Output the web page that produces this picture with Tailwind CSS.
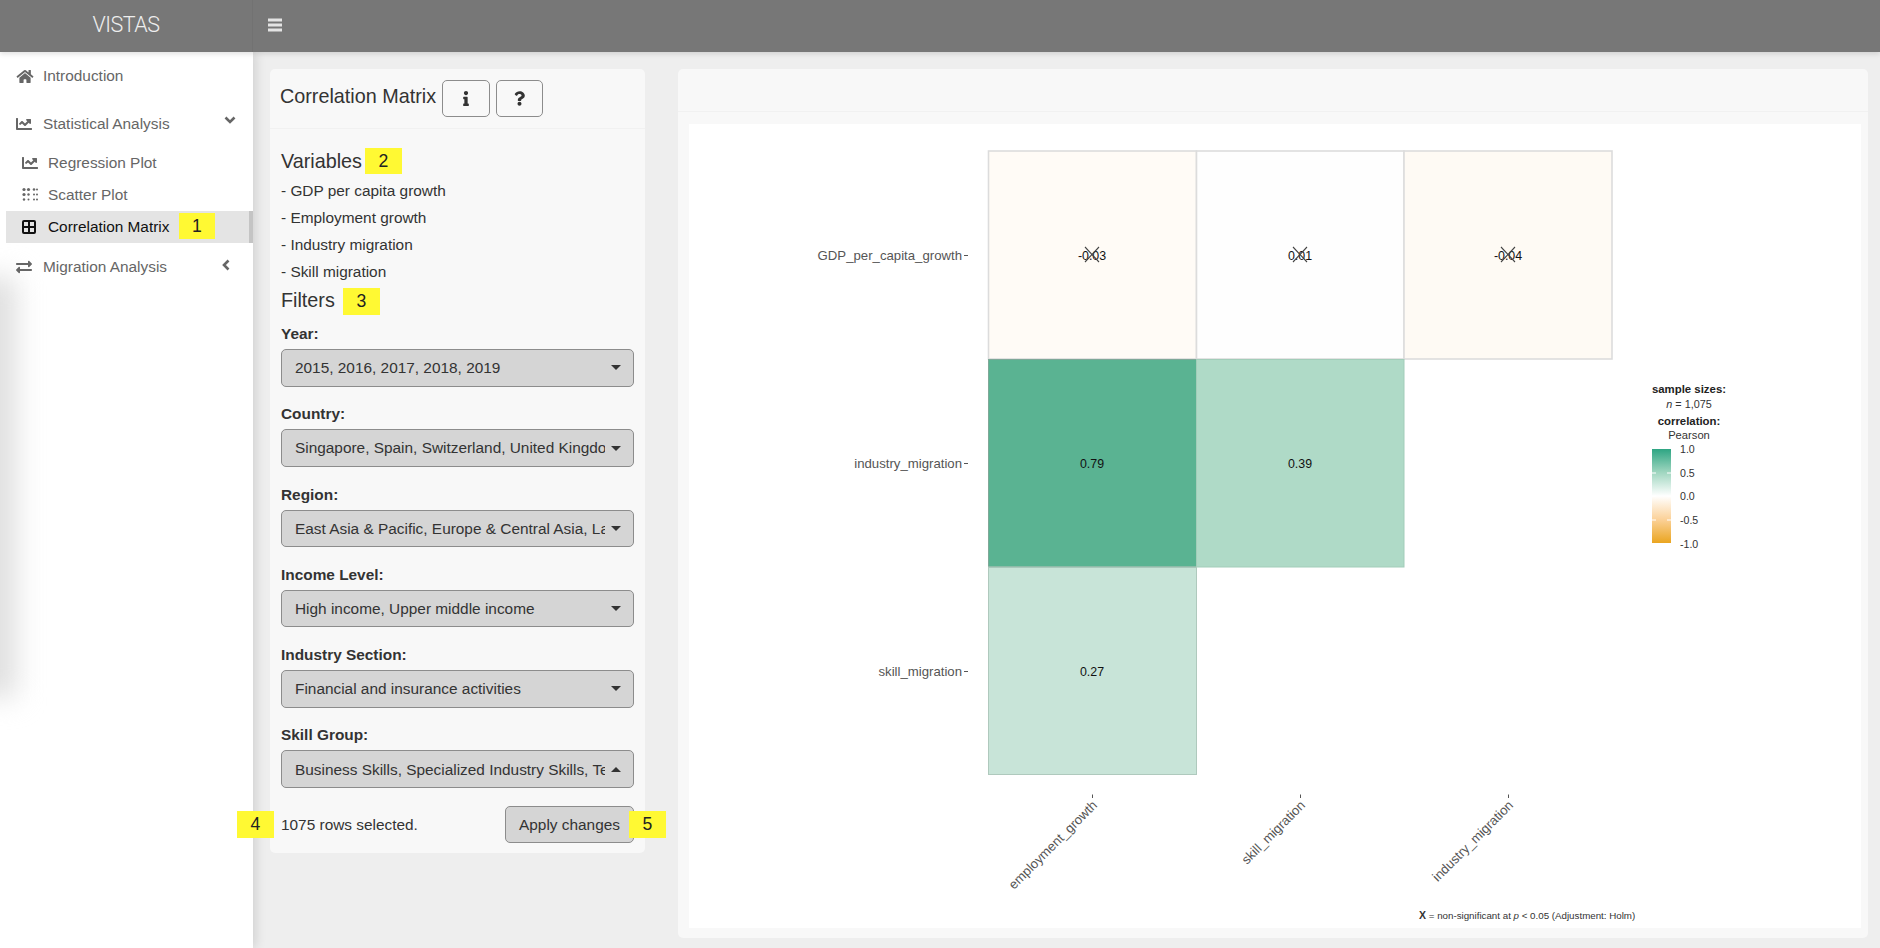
<!DOCTYPE html>
<html lang="en">
<head>
  <meta charset="UTF-8" />
  <title>VISTAS - Correlation Matrix</title>
  <script src="https://cdn.jsdelivr.net/npm/@tailwindcss/browser@4"></script>
</head>
<body class="relative h-[948px] overflow-hidden bg-[#eeeeee] font-['Liberation_Sans',sans-serif] text-[15.4px] text-[#333333]">

  <!-- top bar -->
  <header class="relative z-20 flex h-[52px] bg-[#777777] shadow-[0_2px_5px_rgba(0,0,0,0.12)]">
    <div class="flex w-[253px] items-center justify-center border-r border-[#727272] pb-[1px] font-['Roboto',sans-serif] text-[21.5px] font-light tracking-[-0.5px] text-[#eeeeee]">VISTAS</div>
    <button class="flex w-[44px] items-center justify-center pb-[2px]">
      <svg class="h-[14px] w-[14px] fill-[#e4e4e4]" viewBox="0 0 14 14"><rect y="0.5" width="14" height="3"/><rect y="5.5" width="14" height="3"/><rect y="10.5" width="14" height="3"/></svg>
    </button>
  </header>

  <div class="flex h-[896px]">
    <!-- sidebar -->
    <aside class="relative z-10 w-[253px] shrink-0 overflow-x-clip bg-white pt-[6px] text-[#666666] shadow-[3px_0_10px_rgba(0,0,0,0.12)]">
      <div class="absolute top-[225px] left-[-24px] h-[420px] w-[40px] bg-[#dedede] blur-[14px]"></div>
      <a class="relative flex h-[36px] items-center pl-[16px]">
        <svg class="mr-[9px] h-[15px] w-[18px] fill-[#666666]" viewBox="0 0 576 512"><path d="M280.37 148.26L96 300.11V464a16 16 0 0 0 16 16l112.06-.29a16 16 0 0 0 15.92-16V368a16 16 0 0 1 16-16h64a16 16 0 0 1 16 16v95.64a16 16 0 0 0 16 16.05L464 480a16 16 0 0 0 16-16V300L295.67 148.26a12.19 12.19 0 0 0-15.3 0zM571.6 251.47L488 182.56V44.05a12 12 0 0 0-12-12h-56a12 12 0 0 0-12 12v72.61L318.47 43a48 48 0 0 0-61 0L4.34 251.47a12 12 0 0 0-1.6 16.9l25.5 31A12 12 0 0 0 45.15 301l235.22-193.74a12.19 12.19 0 0 1 15.3 0L530.9 301a12 12 0 0 0 16.9-1.6l25.5-31a12 12 0 0 0-1.7-16.93z"/></svg>
        Introduction
      </a>
      <a class="relative mt-[12px] flex h-[36px] items-center pl-[16px]">
        <svg class="mr-[11px] h-[16px] w-[16px] fill-[#666666]" viewBox="0 0 512 512"><path d="M496 384H64V80c0-8.84-7.16-16-16-16H16C7.16 64 0 71.16 0 80v336c0 17.67 14.33 32 32 32h464c8.84 0 16-7.16 16-16v-32c0-8.84-7.16-16-16-16zM464 96H345.94c-21.38 0-32.09 25.85-16.97 40.97l32.4 32.4L288 242.75l-73.37-73.37c-12.5-12.5-32.76-12.5-45.25 0l-68.69 68.69c-6.25 6.25-6.25 16.38 0 22.63l22.62 22.62c6.25 6.25 16.38 6.25 22.63 0L192 237.25l73.37 73.37c12.5 12.5 32.76 12.5 45.25 0l96-96 32.4 32.4c15.12 15.12 40.97 4.41 40.97-16.97V112c.01-8.84-7.15-16-15.99-16z"/></svg>
        Statistical Analysis
        <svg class="absolute top-[9px] left-[224px] h-[10px] w-[12px] fill-none stroke-[#666666] stroke-[2.6]" viewBox="0 0 12 10"><path d="M1.5 2.5 6 7l4.5-4.5"/></svg>
      </a>
      <div class="mt-[5px] pl-[6px]">
        <a class="relative flex h-[32px] items-center pl-[16px]">
          <svg class="mr-[10px] h-[16px] w-[16px] fill-[#666666]" viewBox="0 0 512 512"><path d="M496 384H64V80c0-8.84-7.16-16-16-16H16C7.16 64 0 71.16 0 80v336c0 17.67 14.33 32 32 32h464c8.84 0 16-7.16 16-16v-32c0-8.84-7.16-16-16-16zM464 96H345.94c-21.38 0-32.09 25.85-16.97 40.97l32.4 32.4L288 242.75l-73.37-73.37c-12.5-12.5-32.76-12.5-45.25 0l-68.69 68.69c-6.25 6.25-6.25 16.38 0 22.63l22.62 22.62c6.25 6.25 16.38 6.25 22.63 0L192 237.25l73.37 73.37c12.5 12.5 32.76 12.5 45.25 0l96-96 32.4 32.4c15.12 15.12 40.97 4.41 40.97-16.97V112c.01-8.84-7.15-16-15.99-16z"/></svg>
          Regression Plot
        </a>
        <a class="relative flex h-[32px] items-center pl-[16px]">
          <svg class="mr-[10px] h-[16px] w-[16px] fill-[#666666]" viewBox="0 0 16 16"><circle cx="2" cy="2.5" r="1.6"/><circle cx="6.5" cy="2.5" r="1.6"/><circle cx="12" cy="2.5" r="1.3"/><circle cx="15" cy="2.5" r="1"/><circle cx="2" cy="7.5" r="1.6"/><circle cx="6.5" cy="7.5" r="1.2"/><circle cx="12" cy="7.5" r="1"/><circle cx="15" cy="7.5" r="1"/><circle cx="2" cy="12.5" r="1.2"/><circle cx="6.5" cy="12.5" r="1"/><circle cx="12" cy="12.5" r="1"/><circle cx="15" cy="12.5" r="1"/></svg>
          Scatter Plot
        </a>
        <a class="relative flex h-[32px] items-center border-r-[4px] border-[#c4c4c4] bg-[#e4e4e4] pl-[15px] text-[#111111]">
          <svg class="mr-[11px] h-[16px] w-[16px] fill-none stroke-[#111111] stroke-[2]" viewBox="0 0 16 16"><rect x="2" y="2" width="12" height="12" rx="1"/><path d="M8 2v12M2 8h12"/></svg>
          Correlation Matrix
        </a>
      </div>
      <a class="relative mt-[6px] flex h-[36px] items-center pl-[16px]">
        <svg class="mr-[11px] h-[16px] w-[16px] fill-[#666666]" viewBox="0 0 512 512"><path d="M0 168v-16c0-13.255 10.745-24 24-24h360V80c0-21.367 25.899-32.042 40.971-16.971l80 80c9.372 9.373 9.372 24.569 0 33.941l-80 80C409.956 271.982 384 261.456 384 240v-48H24c-13.255 0-24-10.745-24-24zm488 152H128v-48c0-21.314-25.862-32.08-40.971-16.971l-80 80c-9.372 9.373-9.372 24.569 0 33.941l80 80C102.057 463.997 128 453.437 128 432v-48h360c13.255 0 24-10.745 24-24v-16c0-13.255-10.745-24-24-24z"/></svg>
        Migration Analysis
        <svg class="absolute top-[10px] left-[221px] h-[12px] w-[10px] fill-none stroke-[#666666] stroke-[2.6]" viewBox="0 0 10 12"><path d="M7.5 1.5 3 6l4.5 4.5"/></svg>
      </a>
    </aside>

    <main class="flex flex-1 items-start gap-[33px] pt-[17px] pr-[12px] pl-[17px]">
      <!-- filter panel -->
      <section class="w-[375px] shrink-0 rounded-[5px] bg-[#f8f8f8]">
        <div class="flex h-[60px] items-center gap-[6px] border-b border-[#f1f1f1] pl-[10px]">
          <h2 class="mb-[3px] text-[19.8px] leading-none text-[#333333]">Correlation Matrix</h2>
          <button class="flex h-[37px] w-[48px] items-center justify-center rounded-[5px] border border-[#8c8c8c] bg-[#f8f8f8]">
            <svg class="h-[15px] w-[6px] fill-[#333333]" viewBox="0 0 192 512"><path d="M20 424.229h20V279.771H20c-11.046 0-20-8.954-20-20V212c0-11.046 8.954-20 20-20h112c11.046 0 20 8.954 20 20v212.229h20c11.046 0 20 8.954 20 20V492c0 11.046-8.954 20-20 20H20c-11.046 0-20-8.954-20-20v-47.771c0-11.046 8.954-20 20-20zM96 0C56.235 0 24 32.235 24 72s32.235 72 72 72 72-32.235 72-72S135.764 0 96 0z"/></svg>
          </button>
          <button class="flex h-[37px] w-[47px] items-center justify-center rounded-[5px] border border-[#8c8c8c] bg-[#f8f8f8]">
            <svg class="h-[15px] w-[11px] fill-[#333333]" viewBox="0 0 384 512"><path d="M202.021 0C122.202 0 70.503 32.703 29.914 91.026c-7.363 10.58-5.093 25.086 5.178 32.874l43.138 32.709c10.373 7.865 25.132 6.026 33.253-4.148 25.049-31.381 43.63-49.449 82.757-49.449 30.764 0 68.816 19.799 68.816 49.631 0 22.552-18.617 34.134-48.993 51.164-35.423 19.86-82.299 44.576-82.299 106.405V320c0 13.255 10.745 24 24 24h72.471c13.255 0 24-10.745 24-24v-5.773c0-42.86 125.268-44.645 125.268-160.627C377.504 66.256 286.902 0 202.021 0zM192 373.459c-38.196 0-69.271 31.075-69.271 69.271 0 38.195 31.075 69.27 69.271 69.27s69.271-31.075 69.271-69.271-31.075-69.27-69.271-69.27z"/></svg>
          </button>
        </div>

        <div class="px-[11px] pb-[10px]">
          <h3 class="mt-[21px] text-[19.8px] leading-[22px]">Variables</h3>
          <ul class="mt-[5px]">
            <li class="flex h-[27px] items-center">- GDP per capita growth</li>
            <li class="flex h-[27px] items-center">- Employment growth</li>
            <li class="flex h-[27px] items-center">- Industry migration</li>
            <li class="flex h-[27px] items-center">- Skill migration</li>
          </ul>
          <h3 class="mt-[3px] text-[19.8px] leading-[24px]">Filters</h3>

          <label class="mt-[11px] block h-[21px] leading-[21px] font-bold">Year:</label>
          <div class="mt-[5px] flex h-[37.5px] items-center justify-between rounded-[5px] border border-[#8c8c8c] bg-[#d5d5d5] pr-[12px] pl-[13px]"><span class="w-[310px] overflow-hidden whitespace-nowrap">2015, 2016, 2017, 2018, 2019</span><span class="border-x-[5px] border-t-[5px] border-x-transparent border-t-[#333333]"></span></div>

          <label class="mt-[16.8px] block h-[21px] leading-[21px] font-bold">Country:</label>
          <div class="mt-[5px] flex h-[37.5px] items-center justify-between rounded-[5px] border border-[#8c8c8c] bg-[#d5d5d5] pr-[12px] pl-[13px]"><span class="w-[310px] overflow-hidden whitespace-nowrap">Singapore, Spain, Switzerland, United Kingdom, United States</span><span class="border-x-[5px] border-t-[5px] border-x-transparent border-t-[#333333]"></span></div>

          <label class="mt-[16.8px] block h-[21px] leading-[21px] font-bold">Region:</label>
          <div class="mt-[5px] flex h-[37.5px] items-center justify-between rounded-[5px] border border-[#8c8c8c] bg-[#d5d5d5] pr-[12px] pl-[13px]"><span class="w-[310px] overflow-hidden whitespace-nowrap">East Asia &amp; Pacific, Europe &amp; Central Asia, Latin America</span><span class="border-x-[5px] border-t-[5px] border-x-transparent border-t-[#333333]"></span></div>

          <label class="mt-[16.8px] block h-[21px] leading-[21px] font-bold">Income Level:</label>
          <div class="mt-[5px] flex h-[37.5px] items-center justify-between rounded-[5px] border border-[#8c8c8c] bg-[#d5d5d5] pr-[12px] pl-[13px]"><span class="w-[310px] overflow-hidden whitespace-nowrap">High income, Upper middle income</span><span class="border-x-[5px] border-t-[5px] border-x-transparent border-t-[#333333]"></span></div>

          <label class="mt-[16.8px] block h-[21px] leading-[21px] font-bold">Industry Section:</label>
          <div class="mt-[5px] flex h-[37.5px] items-center justify-between rounded-[5px] border border-[#8c8c8c] bg-[#d5d5d5] pr-[12px] pl-[13px]"><span class="w-[310px] overflow-hidden whitespace-nowrap">Financial and insurance activities</span><span class="border-x-[5px] border-t-[5px] border-x-transparent border-t-[#333333]"></span></div>

          <label class="mt-[16.8px] block h-[21px] leading-[21px] font-bold">Skill Group:</label>
          <div class="mt-[5px] flex h-[37.5px] items-center justify-between rounded-[5px] border border-[#8c8c8c] bg-[#d5d5d5] pr-[12px] pl-[13px]"><span class="w-[310px] overflow-hidden whitespace-nowrap">Business Skills, Specialized Industry Skills, Tech Skills</span><span class="border-x-[5px] border-b-[5px] border-x-transparent border-b-[#333333]"></span></div>

          <div class="mt-[18px] flex items-center justify-between">
            <span>1075 rows selected.</span>
            <button class="h-[37.5px] rounded-[5px] border border-[#8c8c8c] bg-[#d5d5d5] px-[13px]">Apply changes</button>
          </div>
        </div>
      </section>

      <!-- plot panel -->
      <section class="h-[869px] flex-1 rounded-[5px] bg-[#f8f8f8]">
        <div class="h-[43px] border-b border-[#f1f1f1]"></div>
        <div class="mt-[12px] ml-[11px] h-[804px] w-[1172px] bg-white">
          <svg class="block font-['Liberation_Sans',sans-serif]" width="1172" height="804" viewBox="689 124 1172 804">
            <defs>
              <linearGradient id="legend" x1="0" y1="0" x2="0" y2="1">
                <stop offset="0" stop-color="#2ea583"/>
                <stop offset="0.25" stop-color="#a0d6c0"/>
                <stop offset="0.5" stop-color="#ffffff"/>
                <stop offset="0.75" stop-color="#fbd198"/>
                <stop offset="1" stop-color="#eaa520"/>
              </linearGradient>
            </defs>
            <g stroke="#dcdcdc" stroke-width="1.6">
              <rect x="988.5" y="151" width="208" height="208" fill="#fffbf6"/>
              <rect x="1196.5" y="151" width="207.5" height="208" fill="#fefefe"/>
              <rect x="1404" y="151" width="208" height="208" fill="#fefaf4"/>
            </g>
            <rect x="988" y="359" width="208.5" height="208" fill="#5ab392"/>
            <rect x="1196.5" y="359" width="207.5" height="208" fill="#afdac7"/>
            <rect x="988" y="567" width="208.5" height="208" fill="#c8e4d8"/>
            <g fill="none" stroke="#bcbcbc" stroke-width="1">
              <rect x="988.5" y="359.5" width="208" height="207.5" stroke="#7fa898"/>
              <rect x="1196.5" y="359.5" width="207.5" height="207.5" stroke="#a2cdb9"/>
              <rect x="988.5" y="567" width="208" height="207.5" stroke="#afc9bd"/>
            </g>

            <g font-size="12.4" fill="#111111" text-anchor="middle">
              <text x="1092" y="259.5">-0.03</text>
              <text x="1300" y="259.5">0.01</text>
              <text x="1508" y="259.5">-0.04</text>
              <text x="1092" y="467.5">0.79</text>
              <text x="1300" y="467.5">0.39</text>
              <text x="1092" y="676">0.27</text>
            </g>
            <g stroke="#444444" stroke-width="1.1" fill="none">
              <path d="M1085 247 1099 262M1099 247 1085 262"/>
              <path d="M1293 247 1307 262M1307 247 1293 262"/>
              <path d="M1501 247 1515 262M1515 247 1501 262"/>
            </g>

            <g font-size="13.2" fill="#555555" text-anchor="end">
              <text x="962" y="260">GDP_per_capita_growth</text>
              <text x="962" y="468">industry_migration</text>
              <text x="962" y="676">skill_migration</text>
            </g>
            <g stroke="#555555" stroke-width="1">
              <path d="M964 255.5h4M964 463.5h4M964 671.5h4"/>
              <path d="M1092.5 794.5v3.5M1300.5 794.5v3.5M1508.5 794.5v3.5"/>
            </g>
            <g font-size="13.2" fill="#555555" text-anchor="end">
              <text transform="translate(1098 806) rotate(-45)">employment_growth</text>
              <text transform="translate(1306 806) rotate(-45)">skill_migration</text>
              <text transform="translate(1514 806) rotate(-45)">industry_migration</text>
            </g>

            <g font-size="11.4" fill="#222222" text-anchor="middle" font-weight="bold">
              <text x="1689" y="393">sample sizes:</text>
              <text x="1689" y="425">correlation:</text>
            </g>
            <g font-size="10.8" fill="#333333" text-anchor="middle">
              <text x="1689" y="408"><tspan font-style="italic">n</tspan> = 1,075</text>
              <text x="1689" y="439" font-size="11.2">Pearson</text>
            </g>
            <rect x="1652" y="449" width="19" height="94" fill="url(#legend)"/>
            <path d="M1652 473h4M1667 473h4M1652 496h4M1667 496h4M1652 520h4M1667 520h4" stroke="#ffffff" stroke-width="1"/>
            <g font-size="10.6" fill="#333333">
              <text x="1680" y="453">1.0</text>
              <text x="1680" y="477">0.5</text>
              <text x="1680" y="500">0.0</text>
              <text x="1680" y="524">-0.5</text>
              <text x="1680" y="548">-1.0</text>
            </g>

            <text x="1419" y="918.5" font-size="9.75" fill="#333333"><tspan font-weight="bold" font-size="10.5">X</tspan> = non-significant at <tspan font-style="italic">p</tspan> &lt; 0.05 (Adjustment: Holm)</text>
          </svg>
        </div>
      </section>
    </main>
  </div>

  <!-- numbered callouts -->
  <span class="absolute top-[213px] left-[179px] z-30 flex h-[26px] w-[36px] items-center justify-center bg-[#fff933] text-[17.6px] text-[#222222]">1</span>
  <span class="absolute top-[148px] left-[365px] z-30 flex h-[26px] w-[37px] items-center justify-center bg-[#fff933] text-[17.6px] text-[#222222]">2</span>
  <span class="absolute top-[288px] left-[343px] z-30 flex h-[27px] w-[37px] items-center justify-center bg-[#fff933] text-[17.6px] text-[#222222]">3</span>
  <span class="absolute top-[811px] left-[237px] z-30 flex h-[27px] w-[37px] items-center justify-center bg-[#fff933] text-[17.6px] text-[#222222]">4</span>
  <span class="absolute top-[811px] left-[629px] z-30 flex h-[27px] w-[37px] items-center justify-center bg-[#fff933] text-[17.6px] text-[#222222]">5</span>

</body>
</html>
